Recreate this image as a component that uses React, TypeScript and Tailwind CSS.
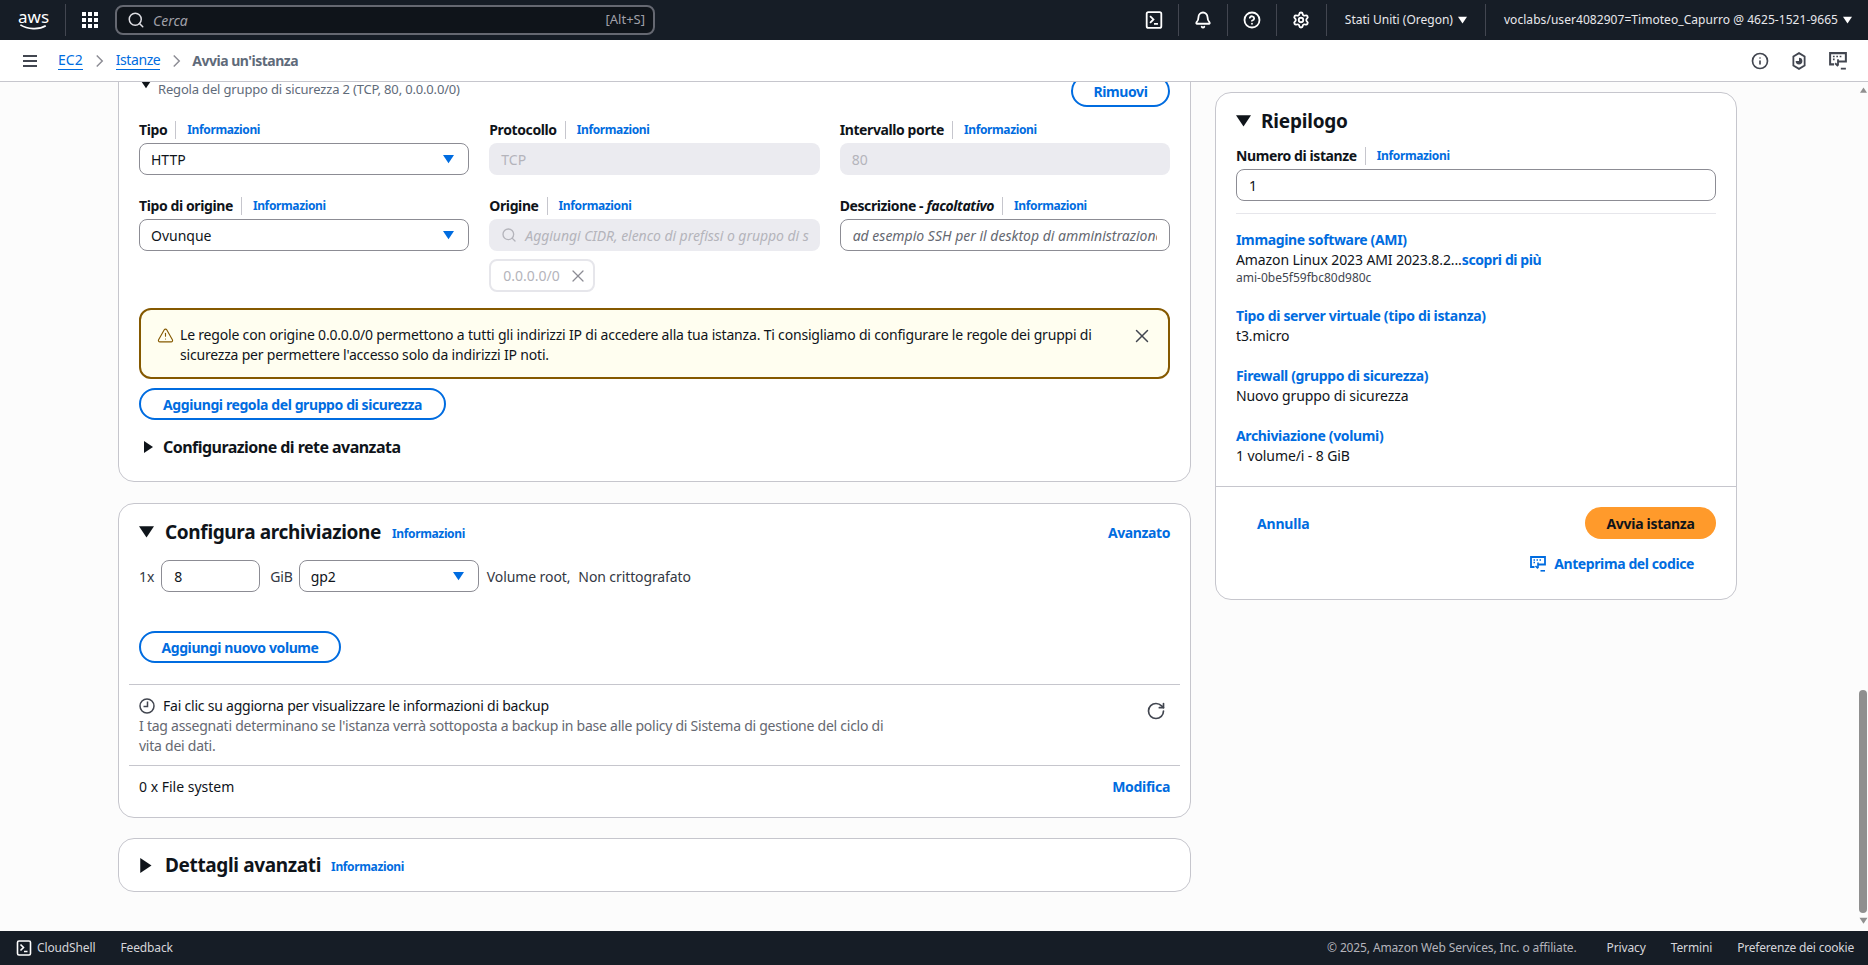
import { Bell, CircleHelp, Info, RotateCw, Search, Settings, TriangleAlert, X } from "lucide-react";

function Caret({ dir = "down", className = "" }: { dir?: "down" | "right" | "up"; className?: string }) {
    const pts = dir === "down" ? "0,1 12,1 6,10" : dir === "right" ? "1,0 10,6 1,12" : "0,10 12,10 6,1";
    return (
        <svg viewBox="0 0 12 12" className={className} fill="currentColor">
            <polygon points={pts} />
        </svg>
    );
}

function ShellIcon({ className = "" }: { className?: string }) {
    return (
        <svg viewBox="0 0 16 16" className={className} fill="none" stroke="currentColor" strokeWidth="1.6">
            <rect x="1.5" y="1" width="13" height="14" rx="1.5" />
            <path d="M4.5 4.5 7.5 7.5 4.5 10.5M8 11.5h3.5" />
        </svg>
    );
}

function CodeIcon({ className = "" }: { className?: string }) {
    return (
        <svg viewBox="0 0 16 16" className={className} fill="none" stroke="currentColor" strokeWidth="1.8">
            <path d="M4.5 11H1V1h14v7.5H8" />
            <path d="M3.5 4h1.5M6.5 4h1.5M9.5 4h1.5M3.5 6.5h1.5" strokeWidth="1.5" />
            <path d="M8 6.5v5.5M5.5 10l2.5 2.5" strokeWidth="1.6" />
            <path d="M10.5 14.8H15" strokeWidth="1.6" />
        </svg>
    );
}

function Hex({ className = "" }: { className?: string }) {
    return (
        <svg viewBox="0 0 16 16" className={className} fill="none" stroke="currentColor" strokeWidth="1.6">
            <path d="M8 1l5 3v8l-5 3-5-3V4z" />
            <path d="M8 5a3 3 0 1 1-3 3h3z" fill="currentColor" stroke="none" />
        </svg>
    );
}

function InfoLink({ className = "" }: { className?: string }) {
    return <span className={`text-[12px] font-bold tracking-[-0.37px] text-[#006ce0] ${className}`}>Informazioni</span>;
}

function Label({ children }: { children: React.ReactNode }) {
    return (
        <div className="flex h-5 items-center text-[14px] leading-5 font-bold tracking-[-0.4px] text-[#0f141a]">
            <span>{children}</span>
            <span className="mr-[11px] ml-[8px] h-[18px] w-px bg-[#c6c6cd]" />
            <InfoLink />
        </div>
    );
}

function SelectBox({ value, className = "" }: { value: string; className?: string }) {
    return (
        <div className={`flex h-8 items-center justify-between rounded-lg border border-[#8c8c94] bg-white pr-[14px] pl-[11px] text-[14px] text-[#0f141a] ${className}`}>
            <span>{value}</span>
            <Caret className="h-[11px] w-[11px] text-[#006ce0]" />
        </div>
    );
}

function PillButton({ children, className = "" }: { children: React.ReactNode; className?: string }) {
    return (
        <button className={`flex h-8 items-center justify-center rounded-full border-2 border-[#006ce0] bg-white text-[14px] font-bold tracking-[-0.4px] text-[#006ce0] ${className}`}>
            {children}
        </button>
    );
}

function Summary({ title, children, className = "" }: { title: string; children: React.ReactNode; className?: string }) {
    return (
        <div className={`text-[14px] leading-5 tracking-[-0.1px] text-[#0f141a] ${className}`}>
            <div className="font-bold tracking-[-0.35px] text-[#006ce0]">{title}</div>
            {children}
        </div>
    );
}

function TopNav() {
    return (
        <header className="flex h-10 shrink-0 items-center bg-[#161d26] text-[13px] text-[#e8e8ec]">
            <div className="ml-[18px] flex w-[31px] flex-col items-center text-white">
                <span className="text-[17px] leading-[15px]">aws</span>
                <svg viewBox="0 0 32 8" className="h-[7px] w-[31px]" fill="none" stroke="currentColor" strokeWidth="2">
                    <path d="M1 1c8 5 21 6 29 1" />
                </svg>
            </div>
            <span className="ml-[16px] h-[32px] w-px bg-[#424650]" />
            <div className="ml-[16px] grid grid-cols-3 gap-[2px]">
                {[1, 2, 3, 4, 5, 6, 7, 8, 9].map((i) => (
                    <span key={i} className="h-[4px] w-[4px] bg-white" />
                ))}
            </div>
            <div className="ml-[17px] flex h-[30px] w-[540px] items-center rounded-lg border-2 border-[#656871] bg-[#0f141a] pr-[8px] pl-[10px]">
                <Search size={18} className="text-[#dedee3]" />
                <span className="ml-[8px] flex-1 text-[14px] text-[#a0a0a8] italic">Cerca</span>
                <span className="text-[13px] text-[#a0a0a8]">[Alt+S]</span>
            </div>
            <div className="ml-auto flex h-full items-center">
                <ShellIcon className="h-[18px] w-[18px] text-white" />
                <span className="mx-[15px] h-[32px] w-px bg-[#424650]" />
                <Bell size={18} strokeWidth={2.4} className="text-white" />
                <span className="mx-[15px] h-[32px] w-px bg-[#424650]" />
                <CircleHelp size={18} strokeWidth={2.4} className="text-white" />
                <span className="mx-[15px] h-[32px] w-px bg-[#424650]" />
                <Settings size={18} strokeWidth={2.4} className="text-white" />
                <span className="mr-[18px] ml-[16px] h-[32px] w-px bg-[#424650]" />
                <span className="text-[12px]">Stati Uniti (Oregon)</span>
                <Caret className="ml-[5px] h-[9px] w-[9px] text-white" />
                <span className="mx-[18px] h-[32px] w-px bg-[#424650]" />
                <span className="text-[12px] tracking-[0.05px]">voclabs/user4082907=Timoteo_Capurro @ 4625-1521-9665</span>
                <Caret className="mr-[16px] ml-[5px] h-[9px] w-[9px] text-white" />
            </div>
        </header>
    );
}

function Breadcrumbs() {
    return (
        <div className="flex h-[42px] shrink-0 items-center border-b border-[#c6c6cd] bg-white text-[#424650]">
            <svg viewBox="0 0 16 16" className="ml-[22px] h-4 w-4" fill="none" stroke="currentColor" strokeWidth="2">
                <path d="M1 3h14M1 8h14M1 13h14" />
            </svg>
            <span className="ml-[20px] border-b border-[#006ce0] text-[14px] leading-[18px] text-[#006ce0]">EC2</span>
            <svg viewBox="0 0 12 16" className="mx-[11px] h-[16px] w-[11px] text-[#8c8c94]" fill="none" stroke="currentColor" strokeWidth="1.6">
                <path d="M3 2l6 6-6 6" />
            </svg>
            <span className="border-b border-[#006ce0] text-[14px] leading-[18px] tracking-[-0.4px] text-[#006ce0]">Istanze</span>
            <svg viewBox="0 0 12 16" className="mr-[10px] ml-[11px] h-[16px] w-[11px] text-[#8c8c94]" fill="none" stroke="currentColor" strokeWidth="1.6">
                <path d="M3 2l6 6-6 6" />
            </svg>
            <span className="text-[14px] font-bold tracking-[-0.5px] text-[#5f6b7a]">Avvia un'istanza</span>
            <div className="mr-[21px] ml-auto flex items-center gap-[21px]">
                <Info size={18} strokeWidth={2.2} />
                <Hex className="h-[18px] w-[18px]" />
                <CodeIcon className="h-[18px] w-[18px]" />
            </div>
        </div>
    );
}

function RuleCard() {
    return (
        <section className="-mt-[20px] flex flex-col rounded-2xl border border-[#c6c6cd] bg-white px-5 pt-[12px] pb-[24px]">
            <div className="flex h-8 items-start justify-between">
                <div className="flex items-start pt-[7px] text-[13px] leading-[14px] tracking-[-0.17px] text-[#5f6b7a]">
                    <Caret className="-mt-[2px] mr-[7px] ml-[2px] h-[10px] w-[10px] text-[#0f141a]" />
                    <span>Regola del gruppo di sicurezza 2 (TCP, 80, 0.0.0.0/0)</span>
                </div>
                <PillButton className="w-[99px]">Rimuovi</PillButton>
            </div>
            <div className="mt-[13px] grid grid-cols-3 gap-x-5">
                <div className="flex flex-col gap-[3px]">
                    <Label>Tipo</Label>
                    <SelectBox value="HTTP" />
                </div>
                <div className="flex flex-col gap-[3px]">
                    <Label>Protocollo</Label>
                    <div className="flex h-8 items-center rounded-lg bg-[#ebebf0] px-[12px] text-[14px] text-[#b4b4bb]">TCP</div>
                </div>
                <div className="flex flex-col gap-[3px]">
                    <Label>Intervallo porte</Label>
                    <div className="flex h-8 items-center rounded-lg bg-[#ebebf0] px-[12px] text-[14px] text-[#b4b4bb]">80</div>
                </div>
            </div>
            <div className="mt-[21px] grid grid-cols-3 gap-x-5">
                <div className="flex flex-col gap-[3px]">
                    <Label>Tipo di origine</Label>
                    <SelectBox value="Ovunque" />
                </div>
                <div className="flex flex-col gap-[3px]">
                    <Label>Origine</Label>
                    <div className="flex h-8 items-center overflow-hidden rounded-lg bg-[#ebebf0] pr-[8px] pl-[12px] text-[14px] whitespace-nowrap text-[#b4b4bb] italic">
                        <Search size={16} className="mr-[8px] shrink-0" />
                        <span className="tracking-[-0.05px]">Aggiungi CIDR, elenco di prefissi o gruppo di s</span>
                    </div>
                    <div className="mt-[5px] flex h-[33px] w-[106px] items-center justify-between rounded-lg border-2 border-[#e6e6eb] pr-[5px] pl-[12px] text-[14px] text-[#b4b4bb]">
                        <span>0.0.0.0/0</span>
                        <X size={20} strokeWidth={1.5} className="text-[#8c8c94]" />
                    </div>
                </div>
                <div className="flex flex-col gap-[3px]">
                    <Label>
                        Descrizione - <i>facoltativo</i>
                    </Label>
                    <input
                        readOnly
                        placeholder="ad esempio SSH per il desktop di amministrazione"
                        className="h-8 rounded-lg border border-[#8c8c94] bg-white px-[12px] text-[14px] outline-none placeholder:text-[#656871] placeholder:italic"
                    />
                </div>
            </div>
            <div className="mt-4 flex h-[71px] items-start rounded-xl border-2 border-[#855900] bg-[#fffef0] pt-[15px] pr-[15px] pl-[16px]">
                <TriangleAlert size={17} strokeWidth={1.6} className="mt-[2px] shrink-0 text-[#855900]" />
                <p className="ml-[6px] flex-1 text-[14px] leading-5 tracking-[-0.19px] text-[#0f141a]">
                    Le regole con origine 0.0.0.0/0 permettono a tutti gli indirizzi IP di accedere alla tua istanza. Ti consigliamo di configurare le regole dei gruppi di sicurezza per permettere l'accesso solo da indirizzi IP noti.
                </p>
                <X size={22} strokeWidth={1.6} className="ml-[25px] shrink-0 text-[#424650]" />
            </div>
            <PillButton className="mt-[9px] w-[307px]">Aggiungi regola del gruppo di sicurezza</PillButton>
            <div className="mt-[17px] flex items-center text-[16px] leading-5 font-bold tracking-[-0.54px] text-[#0f141a]">
                <Caret dir="right" className="mr-[8px] ml-[4px] h-[12px] w-[12px]" />
                <span>Configurazione di rete avanzata</span>
            </div>
        </section>
    );
}

function StorageCard() {
    return (
        <section className="flex flex-col rounded-2xl border border-[#c6c6cd] bg-white pb-[20px]">
            <div className="mt-[15px] flex h-[26px] items-center px-5">
                <Caret className="mr-[11px] h-[15px] w-[15px] text-[#0f141a]" />
                <h2 className="text-[19px] leading-[26px] font-bold tracking-[-0.35px] text-[#0f141a]">Configura archiviazione</h2>
                <InfoLink className="mt-[3px] ml-[11px]" />
                <span className="ml-auto text-[14px] font-bold tracking-[-0.4px] text-[#006ce0]">Avanzato</span>
            </div>
            <div className="mt-[15px] flex h-8 items-center px-5 text-[14px] tracking-[-0.1px] text-[#333843]">
                <span>1x</span>
                <input readOnly value="8" className="ml-[7px] h-8 w-[99px] rounded-lg border border-[#8c8c94] bg-white px-[12px] text-[#0f141a] outline-none" />
                <span className="ml-[10px]">GiB</span>
                <SelectBox value="gp2" className="ml-[6px] w-[180px]" />
                <span className="ml-[8px]">Volume root,</span>
                <span className="ml-[8px]">Non crittografato</span>
            </div>
            <div className="mt-[39px] px-5">
                <PillButton className="w-[202px]">Aggiungi nuovo volume</PillButton>
            </div>
            <div className="mx-[10px] mt-[21px] border-t border-[#c6c6cd]" />
            <div className="flex items-start justify-between px-5 pt-[11px]">
                <div className="w-[760px] text-[14px] leading-5 tracking-[-0.22px]">
                    <div className="flex items-center text-[#0f141a]">
                        <svg viewBox="0 0 16 16" className="mr-[8px] h-4 w-4 text-[#424650]" fill="none" stroke="currentColor" strokeWidth="1.5">
                            <circle cx="8" cy="8" r="7" />
                            <path d="M8.5 3.5v5h-4" />
                        </svg>
                        Fai clic su aggiorna per visualizzare le informazioni di backup
                    </div>
                    <p className="tracking-[-0.25px] text-[#656871]">
                        I tag assegnati determinano se l'istanza verrà sottoposta a backup in base alle policy di Sistema di gestione del ciclo di vita dei dati.
                    </p>
                </div>
                <RotateCw size={20} strokeWidth={2} className="mt-[5px] mr-[4px] text-[#424650]" />
            </div>
            <div className="mx-[10px] mt-[9px] border-t border-[#c6c6cd]" />
            <div className="flex justify-between px-5 pt-[11px] text-[14px] leading-5 text-[#0f141a]">
                <span>0 x File system</span>
                <span className="font-bold tracking-[-0.3px] text-[#006ce0]">Modifica</span>
            </div>
        </section>
    );
}

function AdvancedCard() {
    return (
        <section className="-mt-px flex h-[54px] items-center rounded-2xl border border-[#c6c6cd] bg-white px-5">
            <Caret dir="right" className="mr-[11px] h-[15px] w-[15px] text-[#0f141a]" />
            <h2 className="text-[19px] leading-[26px] font-bold tracking-[-0.35px] text-[#0f141a]">Dettagli avanzati</h2>
            <InfoLink className="mt-[3px] ml-[10px]" />
        </section>
    );
}

function SummaryCard() {
    return (
        <aside className="mt-[10px] flex h-[508px] w-[522px] shrink-0 flex-col rounded-2xl border border-[#c6c6cd] bg-white">
            <div className="px-5 pt-[15px]">
                <div className="flex h-[26px] items-center">
                    <Caret className="mr-[10px] h-[15px] w-[15px] text-[#0f141a]" />
                    <h2 className="text-[19px] font-bold tracking-[-0.2px] text-[#0f141a]">Riepilogo</h2>
                </div>
                <div className="mt-[12px]">
                    <Label>Numero di istanze</Label>
                </div>
                <input readOnly value="1" className="mt-[3px] h-8 w-full rounded-lg border border-[#8c8c94] bg-white px-[12px] text-[14px] text-[#0f141a] outline-none" />
                <div className="mt-[12px] border-t border-[#e6e6eb]" />
                <Summary title="Immagine software (AMI)" className="mt-[16px]">
                    <div>
                        Amazon Linux 2023 AMI 2023.8.2...<span className="font-bold tracking-[-0.4px] text-[#006ce0]">scopri di più</span>
                    </div>
                    <div className="text-[12px] leading-4 tracking-normal text-[#424650]">ami-0be5f59fbc80d980c</div>
                </Summary>
                <Summary title="Tipo di server virtuale (tipo di istanza)" className="mt-[20px]">
                    <div>t3.micro</div>
                </Summary>
                <Summary title="Firewall (gruppo di sicurezza)" className="mt-[20px]">
                    <div>Nuovo gruppo di sicurezza</div>
                </Summary>
                <Summary title="Archiviazione (volumi)" className="mt-[20px]">
                    <div>1 volume/i - 8 GiB</div>
                </Summary>
            </div>
            <div className="mt-[20px] border-t border-[#c6c6cd]" />
            <div className="mt-[20px] flex items-center justify-between px-5">
                <span className="ml-[21px] text-[14px] font-bold tracking-[-0.2px] text-[#006ce0]">Annulla</span>
                <button className="flex h-8 w-[131px] items-center justify-center rounded-full bg-[#ff9a2b] text-[14px] font-bold tracking-[-0.3px] text-[#0f141a]">Avvia istanza</button>
            </div>
            <div className="mt-[14px] flex items-center justify-end pr-[42px] text-[14px] font-bold tracking-[-0.4px] text-[#006ce0]">
                <CodeIcon className="mr-[8px] h-4 w-4" />
                <span>Anteprima del codice</span>
            </div>
        </aside>
    );
}

function ScrollBar() {
    return (
        <div className="flex w-[10px] shrink-0 flex-col items-center pt-[5px] pb-[6px] text-[#8f8f8f]">
            <Caret dir="up" className="h-[7px] w-[9px]" />
            <div className="mt-auto h-[223px] w-[8px] rounded-full bg-[#8f8f8f]" />
            <Caret className="mt-[4px] h-[8px] w-[9px]" />
        </div>
    );
}

function Footer() {
    return (
        <footer className="flex h-[34px] shrink-0 items-center bg-[#161d26] text-[12px] tracking-[-0.13px] text-[#d5d5da]">
            <ShellIcon className="ml-[16px] h-4 w-4 text-white" />
            <span className="ml-[5px]">CloudShell</span>
            <span className="ml-[25px]">Feedback</span>
            <span className="ml-auto text-[#b4b4bb]">© 2025, Amazon Web Services, Inc. o affiliate.</span>
            <span className="ml-[30px]">Privacy</span>
            <span className="ml-[25px]">Termini</span>
            <span className="mr-[14px] ml-[25px] tracking-[-0.2px]">Preferenze dei cookie</span>
        </footer>
    );
}

export default function App() {
    return (
        <div className="flex h-[965px] flex-col overflow-hidden bg-[#fcfcfc] font-['Noto_Sans',sans-serif]">
            <TopNav />
            <Breadcrumbs />
            <main className="flex min-h-0 flex-1 overflow-hidden">
                <div className="flex flex-1 items-start gap-[24px] pl-[118px]">
                    <div className="flex w-[1073px] shrink-0 flex-col gap-[21px]">
                        <RuleCard />
                        <StorageCard />
                        <AdvancedCard />
                    </div>
                    <SummaryCard />
                </div>
                <ScrollBar />
            </main>
            <Footer />
        </div>
    );
}
